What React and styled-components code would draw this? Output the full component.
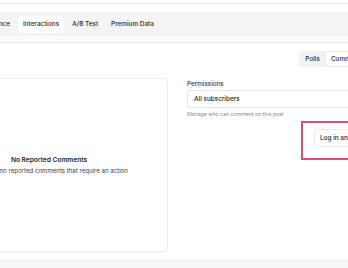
import React from "react";
import styled, { createGlobalStyle } from "styled-components";

const GlobalStyle = createGlobalStyle`
  html, body {
    margin: 0;
    padding: 0;
    background: #ffffff;
    overflow: hidden;
  }
  body {
    font-family: Inter, "Noto Sans", sans-serif;
    color: #1f1f22;
    width: 348px;
    height: 268px;
  }
`;

const Page = styled.div`
  width: 348px;
  height: 268px;
  display: flex;
  flex-direction: column;
  overflow: hidden;
`;

const TopEdge = styled.div`
  height: 3px;
  border-bottom: 1px solid #eeeeef;
  flex-shrink: 0;
`;

const NavWrap = styled.div`
  margin-top: 8px;
  padding-bottom: 6px;
  background: #fbfbfc;
  border-bottom: 1px solid #ededee;
  flex-shrink: 0;
`;

const TabStrip = styled.div`
  height: 24px;
  background: #f4f4f5;
  display: flex;
  align-items: center;
  gap: 3px;
  margin-left: -24px;
`;

const Tab = styled.div`
  height: 17px;
  padding: 0 5px;
  display: flex;
  align-items: center;
  font-size: 6.4px;
  font-weight: 500;
  color: #2a2a2e;
  background: ${({ active }) => (active ? "#ffffff" : "transparent")};
  border-radius: 3px;
  box-shadow: ${({ active }) => (active ? "0 0 1px rgba(0,0,0,0.12)" : "none")};
  white-space: nowrap;
`;

const Main = styled.div`
  width: 440px;
  margin-left: -70px;
  padding-top: 8px;
  display: flex;
  flex-direction: column;
  gap: 11px;
  flex: 1;
`;

const ToolRow = styled.div`
  display: flex;
  justify-content: flex-end;
`;

const Toggle = styled.div`
  height: 16px;
  padding: 1px;
  box-sizing: border-box;
  background: #f2f2f3;
  border-radius: 3px;
  display: flex;
  align-items: stretch;
  gap: 1px;
`;

const ToggleItem = styled.div`
  padding: 0 5px;
  display: flex;
  align-items: center;
  font-size: 6.4px;
  font-weight: 500;
  color: #2c2c30;
  background: ${({ active }) => (active ? "#ffffff" : "transparent")};
  border-radius: 2px;
  box-shadow: ${({ active }) => (active ? "0 0 1px rgba(0,0,0,0.15)" : "none")};
  white-space: nowrap;
`;

const Columns = styled.div`
  display: flex;
  gap: 19px;
  align-items: flex-start;
`;

const Card = styled.div`
  width: 238px;
  height: 174px;
  box-sizing: border-box;
  border: 1px solid #ececee;
  border-radius: 4px;
  box-shadow: 0 1px 1px rgba(0, 0, 0, 0.03);
  display: flex;
  flex-direction: column;
  align-items: center;
  justify-content: center;
  gap: 3px;
`;

const EmptyTitle = styled.div`
  font-size: 6.6px;
  font-weight: 600;
  color: #26262a;
`;

const EmptyText = styled.div`
  font-size: 6.1px;
  color: #3c3c40;
`;

const Side = styled.div`
  flex: 1;
  padding-top: 2px;
  display: flex;
  flex-direction: column;
  align-items: stretch;
`;

const Label = styled.div`
  font-size: 6.3px;
  font-weight: 500;
  color: #3a3a3e;
  margin-bottom: 2px;
`;

const Select = styled.div`
  height: 18px;
  box-sizing: border-box;
  border: 1px solid #e4e4e6;
  border-radius: 3px;
  padding: 0 6px;
  display: flex;
  align-items: center;
  font-size: 6.4px;
  font-weight: 500;
  color: #222226;
`;

const Help = styled.div`
  margin-top: 3px;
  font-size: 5.2px;
  color: #8a8a90;
`;

const Highlight = styled.div`
  align-self: flex-end;
  width: 69px;
  margin-top: 4px;
  height: 39px;
  box-sizing: border-box;
  border: 2px solid #e8477c;
  border-right: none;
  padding: 6px 0 0 11px;
  display: flex;
  align-items: flex-start;
`;

const LoginButton = styled.div`
  height: 18px;
  box-sizing: border-box;
  border: 1px solid #ececee;
  border-right: none;
  border-radius: 3px 0 0 3px;
  padding: 0 5px;
  flex: 1;
  display: flex;
  align-items: center;
  font-size: 6.4px;
  font-weight: 500;
  color: #232327;
  white-space: nowrap;
  overflow: hidden;
`;

const Footer = styled.div`
  margin-top: 8px;
  height: 8px;
  flex-shrink: 0;
  background: #f6f6f7;
  border-top: 1px solid #eeeeef;
`;

export default function App() {
  return (
    <>
      <GlobalStyle />
      <Page>
        <TopEdge />
        <NavWrap>
          <TabStrip>
            <Tab>Audience</Tab>
            <Tab active>Interactions</Tab>
            <Tab>A/B Test</Tab>
            <Tab>Premium Data</Tab>
          </TabStrip>
        </NavWrap>
        <Main>
          <ToolRow>
            <Toggle>
              <ToggleItem>Polls</ToggleItem>
              <ToggleItem active>Comments</ToggleItem>
            </Toggle>
          </ToolRow>
          <Columns>
            <Card>
              <EmptyTitle>No Reported Comments</EmptyTitle>
              <EmptyText>There are no reported comments that require an action</EmptyText>
            </Card>
            <Side>
              <Label>Permissions</Label>
              <Select>All subscribers</Select>
              <Help>Manage who can comment on this post</Help>
              <Highlight>
                <LoginButton>Log in and comment</LoginButton>
              </Highlight>
            </Side>
          </Columns>
        </Main>
        <Footer />
      </Page>
    </>
  );
}
